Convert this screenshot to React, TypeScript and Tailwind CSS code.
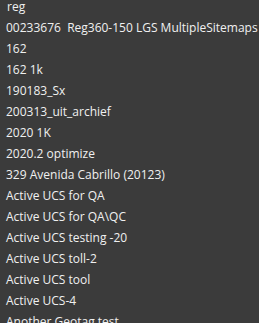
const items = [
  "00233676  Reg360-150 LGS MultipleSitemaps",
  "162",
  "162 1k",
  "190183_Sx",
  "200313_uit_archief",
  "2020 1K",
  "2020.2 optimize",
  "329 Avenida Cabrillo (20123)",
  "Active UCS for QA",
  "Active UCS for QA\\QC",
  "Active UCS testing -20",
  "Active UCS toll-2",
  "Active UCS tool",
  "Active UCS-4",
  "Another Geotag test",
];

export default function App() {
  return (
    <div
      className="h-[323px] w-[259px] overflow-hidden bg-[#3b3b3b] text-[12px] text-[#f0f0f0]"
      style={{ fontFamily: '"Open Sans", "Noto Sans", sans-serif' }}
    >
      <div className="flex flex-col">
        {/* search text, list scrolled a little so the first row is short */}
        <div className="h-[17px] whitespace-pre pl-[7px] leading-[13px]">reg</div>
        {items.map((item) => (
          <div key={item} className="flex h-[21px] items-center whitespace-pre pl-[6px]">
            {item}
          </div>
        ))}
      </div>
    </div>
  );
}
